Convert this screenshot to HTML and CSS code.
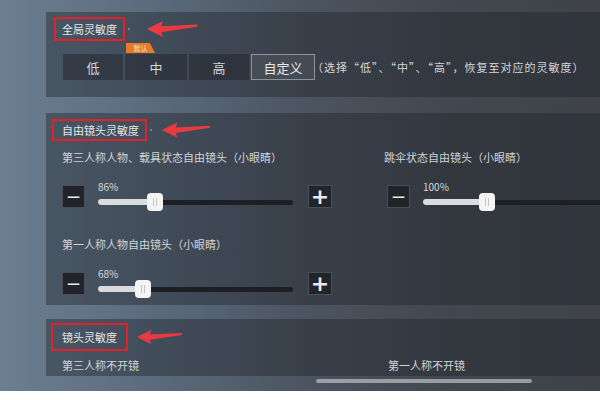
FILE: index.html
```html
<!DOCTYPE html>
<html lang="zh-CN">
<head>
    <meta charset="UTF-8">
    <meta name="viewport" content="width=device-width, initial-scale=1.0">
    <title>灵敏度设置</title>
    <link rel="stylesheet" href="styles.css">
</head>
<body>

    <div class="screen">

        <!-- 全局灵敏度 -->
        <section class="panel panel-global">
            <div class="head">
                <span class="mark mark-global">全局灵敏度</span>
                <span class="dot"></span>
                <svg class="arrow arrow-global" viewBox="0 0 56 20"><path d="M0 10 L18 1 L16 7 L56 5 L56 7.5 L16 13.5 L18 19 Z"/></svg>
            </div>
            <div class="levels">
                <button class="level level-low">低</button>
                <button class="level level-mid">中<span class="tag">默认</span></button>
                <button class="level level-high">高</button>
                <button class="level level-custom">自定义</button>
                <span class="hint">（选择“低”、“中”、“高”，恢复至对应的灵敏度）</span>
            </div>
        </section>

        <!-- 自由镜头灵敏度 -->
        <section class="panel panel-free">
            <div class="head">
                <span class="mark mark-free">自由镜头灵敏度</span>
                <span class="dot"></span>
                <svg class="arrow arrow-free" viewBox="0 0 56 20"><path d="M0 10 L18 1 L16 7 L56 5 L56 7.5 L16 13.5 L18 19 Z"/></svg>
            </div>
            <div class="columns">
                <div class="col">
                    <div class="setting">
                        <div class="label">第三人称人物、载具状态自由镜头（小眼睛）</div>
                        <div class="slider-row">
                            <button class="step">&#8212;</button>
                            <div class="slider">
                                <span class="value">86%</span>
                                <div class="track">
                                    <div class="rail"><div class="fill" style="width:29%"></div></div>
                                    <span class="knob" style="left:29%"></span>
                                </div>
                            </div>
                            <button class="step step-plus">+</button>
                        </div>
                    </div>
                    <div class="setting">
                        <div class="label">第一人称人物自由镜头（小眼睛）</div>
                        <div class="slider-row">
                            <button class="step">&#8212;</button>
                            <div class="slider">
                                <span class="value">68%</span>
                                <div class="track">
                                    <div class="rail"><div class="fill" style="width:23%"></div></div>
                                    <span class="knob" style="left:23%"></span>
                                </div>
                            </div>
                            <button class="step step-plus">+</button>
                        </div>
                    </div>
                </div>
                <div class="col col-right">
                    <div class="setting">
                        <div class="label">跳伞状态自由镜头（小眼睛）</div>
                        <div class="slider-row">
                            <button class="step">&#8212;</button>
                            <div class="slider">
                                <span class="value">100%</span>
                                <div class="track">
                                    <div class="rail"><div class="fill" style="width:33%"></div></div>
                                    <span class="knob" style="left:33%"></span>
                                </div>
                            </div>
                        </div>
                    </div>
                </div>
            </div>
        </section>

        <!-- 镜头灵敏度 -->
        <section class="panel panel-scope">
            <div class="head">
                <span class="mark mark-scope">镜头灵敏度</span>
                <svg class="arrow arrow-scope" viewBox="0 0 56 20"><path d="M0 10 L18 1 L16 7 L56 5 L56 7.5 L16 13.5 L18 19 Z"/></svg>
            </div>
            <div class="scope-labels">
                <span class="label">第三人称不开镜</span>
                <span class="label">第一人称不开镜</span>
            </div>
        </section>

        <div class="scrollbar"></div>
    </div>

</body>
</html>
```

FILE: styles.css
```css
/* Basic Styling */
body {
    margin: 0;
    padding: 0;
    background-color: #fff;
    font-family: "Noto Sans CJK SC", "Noto Sans", sans-serif;
    overflow: hidden;
}

.screen {
    height: 391px;
    overflow: hidden;
    padding: 12px 0 0 46px;
    box-sizing: border-box;
    background: linear-gradient(90deg, #6b7f91 0%, #5d6e80 22%, #4c5561 50%, #43474f 75%, #3f4249 100%);
}

.panel {
    background-color: rgba(32, 35, 43, 0.42);
    box-sizing: border-box;
}

.head {
    display: flex;
    align-items: center;
}

.mark {
    display: inline-block;
    box-sizing: border-box;
    border: 2px solid #e3212b;
    color: #e4e7ea;
    font-size: 11px;
    white-space: nowrap;
}

.dot {
    width: 2px;
    height: 2px;
    border-radius: 50%;
    background-color: #8b9199;
    margin-left: 3px;
}

.arrow {
    fill: #ea3a3f;
    height: 18px;
}

/* 全局灵敏度 */
.panel-global {
    height: 85px;
    margin-bottom: 16px;
    padding: 5px 0 0 8px;
}

.mark-global {
    height: 24px;
    line-height: 20px;
    padding: 0 6px;
}

.arrow-global {
    width: 54px;
    margin-left: 15px;
}

.levels {
    display: flex;
    align-items: center;
    margin-top: 13px;
    padding-left: 9px;
}

.level {
    position: relative;
    height: 26px;
    margin: 0 2px 0 0;
    padding: 0;
    border: none;
    background-color: rgba(28, 32, 40, 0.45);
    color: #d3d7db;
    font-family: inherit;
    font-size: 13px;
}

.level-low { width: 60px; }
.level-mid { width: 62px; }
.level-high { width: 60px; }

.level-custom {
    width: 64px;
    border: 1px solid #8d939b;
    background-color: rgba(80, 86, 95, 0.55);
    color: #e6e8ea;
}

.tag {
    position: absolute;
    top: -11px;
    left: 1px;
    width: 29px;
    height: 10px;
    line-height: 10px;
    font-size: 7px;
    color: #fbe3c9;
    background-color: #e67a26;
    clip-path: polygon(0 0, 82% 0, 100% 100%, 0 100%);
}

.hint {
    margin-left: -5px;
    color: #d3d7db;
    font-size: 11px;
    letter-spacing: 1px;
    white-space: nowrap;
}

/* 自由镜头灵敏度 */
.panel-free {
    height: 192px;
    margin-bottom: 14px;
    padding: 6px 0 0 6px;
}

.mark-free {
    height: 22px;
    line-height: 18px;
    padding: 0 6px 0 8px;
}

.arrow-free {
    width: 48px;
    margin-left: 10px;
}

.columns {
    display: grid;
    grid-template-columns: 322px 1fr;
    padding-left: 10px;
    margin-top: 8px;
}

.setting + .setting {
    margin-top: 25px;
}

.label {
    color: #cfd3d7;
    font-size: 11px;
    line-height: 16px;
    white-space: nowrap;
}

.slider-row {
    display: flex;
    align-items: flex-start;
    margin-top: 20px;
}

.col-right .slider-row {
    padding-left: 3px;
}

.step {
    width: 23px;
    height: 23px;
    padding: 0;
    border: 1px solid #4b5058;
    background-color: #212429;
    color: #e8e8e8;
    font-family: "DejaVu Sans", sans-serif;
    font-size: 13px;
    font-weight: bold;
    line-height: 19px;
}

.step-plus {
    width: 24px;
    margin-left: 15px;
    font-size: 22px;
    line-height: 19px;
}

.slider {
    display: flex;
    flex-direction: column;
    width: 195px;
    margin: -4px 0 0 13px;
}

.value {
    color: #d8dbde;
    font-size: 10px;
    line-height: 12px;
}

.track {
    position: relative;
    display: flex;
    align-items: center;
    height: 18px;
}

.rail {
    display: flex;
    align-items: center;
    flex: 1;
    height: 5px;
    border-radius: 3px;
    background-color: #1c1f24;
}

.fill {
    height: 6px;
    border-radius: 3px 0 0 3px;
    background-color: #d9dbde;
}

.knob {
    position: absolute;
    top: 0;
    width: 16px;
    height: 18px;
    margin-left: -8px;
    box-sizing: border-box;
    border-radius: 4px;
    background-color: #f4f4f4;
    border-left: 6px solid #f4f4f4;
    border-right: 6px solid #f4f4f4;
    background-image: linear-gradient(90deg, #c3c5c8 1px, transparent 1px, transparent 3px, #c3c5c8 3px);
    background-size: 4px 8px;
    background-position: center;
    background-repeat: no-repeat;
}

/* 镜头灵敏度 */
.panel-scope {
    height: 57px;
    padding: 4px 0 0 5px;
}

.mark-scope {
    height: 28px;
    line-height: 24px;
    padding: 0 9px;
}

.arrow-scope {
    width: 45px;
    margin-left: 9px;
}

.scope-labels {
    display: grid;
    grid-template-columns: 326px 1fr;
    margin-top: 6px;
    padding-left: 11px;
}

.scrollbar {
    width: 216px;
    height: 4px;
    margin: 3px 0 0 270px;
    border-radius: 2px;
    background-color: rgba(190, 192, 198, 0.7);
}
```
